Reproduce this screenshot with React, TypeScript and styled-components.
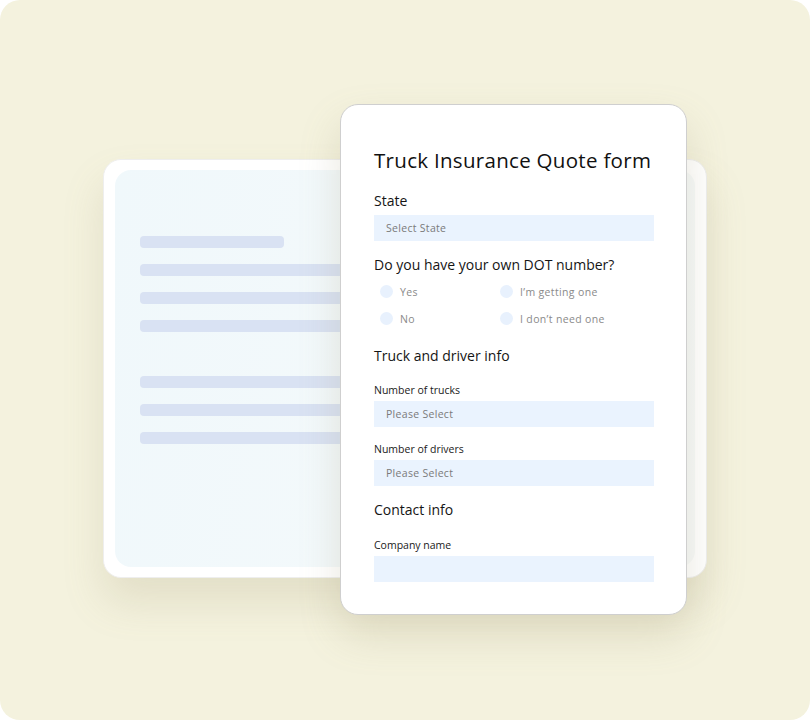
import styled, { createGlobalStyle } from "styled-components";

const GlobalStyle = createGlobalStyle`
  html, body {
    margin: 0;
    padding: 0;
    background: #ffffff;
  }
  * {
    box-sizing: border-box;
  }
`;

const Page = styled.div`
  width: 810px;
  height: 720px;
  background-color: #f4f2de;
  border-radius: 20px;
  display: grid;
  overflow: hidden;
  font-family: "Open Sans", "Noto Sans", sans-serif;
`;

const BackCard = styled.div`
  grid-area: 1 / 1;
  margin: 159px 0 0 103px;
  width: 604px;
  height: 419px;
  background-color: #ffffff;
  border: 1px solid #eeeeee;
  border-radius: 18px;
  padding: 10px 11px;
  box-shadow: 0px 24px 40px rgba(150, 140, 100, 0.18);
`;

const BackPanel = styled.div`
  height: 100%;
  border-radius: 16px;
  background: linear-gradient(100deg, #f0f8fb 0%, #f3f9fb 45%, #f8fafa 100%);
  padding: 66px 0 0 25px;
  display: flex;
  flex-direction: column;
`;

const LineGroup = styled.div`
  display: flex;
  flex-direction: column;
  gap: 16px;
  margin-bottom: 44px;
`;

const Line = styled.div<{ $short?: boolean }>`
  height: 12px;
  width: ${(props) => (props.$short ? "144px" : "320px")};
  background-color: #d9e2f3;
  border-radius: 4px;
`;

const FrontCard = styled.div`
  grid-area: 1 / 1;
  margin: 104px 0 0 340px;
  width: 347px;
  height: 511px;
  background-color: #ffffff;
  border: 1.5px solid #cfcfcf;
  border-radius: 18px;
  padding: 40px 33px 0 33px;
  box-shadow: 0px 20px 40px rgba(150, 140, 100, 0.22);
  display: flex;
  flex-direction: column;
`;

const Title = styled.h1`
  margin: 0 0 16px 0;
  font-size: 20.5px;
  font-weight: 400;
  color: #111111;
  line-height: 30px;
  letter-spacing: 0.3px;
`;

const Heading = styled.div<{ $gap?: number }>`
  font-size: 14px;
  color: #151515;
  line-height: 20px;
  margin-bottom: ${(props) => props.$gap ?? 5}px;
`;

const Label = styled.div`
  font-size: 10.5px;
  color: #1a1a1a;
  line-height: 16px;
  margin-bottom: 3px;
`;

const Field = styled.div<{ $after?: number }>`
  height: 26px;
  width: 280px;
  background-color: #eaf3fe;
  display: flex;
  align-items: center;
  padding-left: 12px;
  font-size: 10.5px;
  letter-spacing: 0.3px;
  color: #7a7a7a;
  margin-bottom: ${(props) => props.$after ?? 16}px;
`;

const RadioGrid = styled.div`
  display: grid;
  grid-template-columns: 120px 1fr;
  row-gap: 10px;
  padding-left: 6px;
  margin-bottom: 19px;
`;

const RadioItem = styled.div`
  display: flex;
  align-items: center;
  gap: 7px;
  font-size: 10.5px;
  letter-spacing: 0.35px;
  color: #8a8a8a;
  height: 17px;
`;

const Dot = styled.span`
  width: 13px;
  height: 13px;
  border-radius: 50%;
  background-color: #e8f1fd;
`;

const radios = ["Yes", "I\u2019m getting one", "No", "I don\u2019t need one"];

export default function App() {
  return (
    <>
      <GlobalStyle />
      <Page>
        <BackCard>
          <BackPanel>
            <LineGroup>
              <Line $short />
              <Line />
              <Line />
              <Line />
            </LineGroup>
            <LineGroup>
              <Line />
              <Line />
              <Line />
            </LineGroup>
          </BackPanel>
        </BackCard>
        <FrontCard>
          <Title>Truck Insurance Quote form</Title>
          <Heading $gap={4}>State</Heading>
          <Field $after={14}>Select State</Field>
          <Heading $gap={8}>Do you have your own DOT number?</Heading>
          <RadioGrid>
            {radios.map((r) => (
              <RadioItem key={r}>
                <Dot />
                {r}
              </RadioItem>
            ))}
          </RadioGrid>
          <Heading $gap={16}>Truck and driver info</Heading>
          <Label>Number of trucks</Label>
          <Field $after={14}>Please Select</Field>
          <Label>Number of drivers</Label>
          <Field $after={14}>Please Select</Field>
          <Heading $gap={17}>Contact info</Heading>
          <Label>Company name</Label>
          <Field />
        </FrontCard>
      </Page>
    </>
  );
}
